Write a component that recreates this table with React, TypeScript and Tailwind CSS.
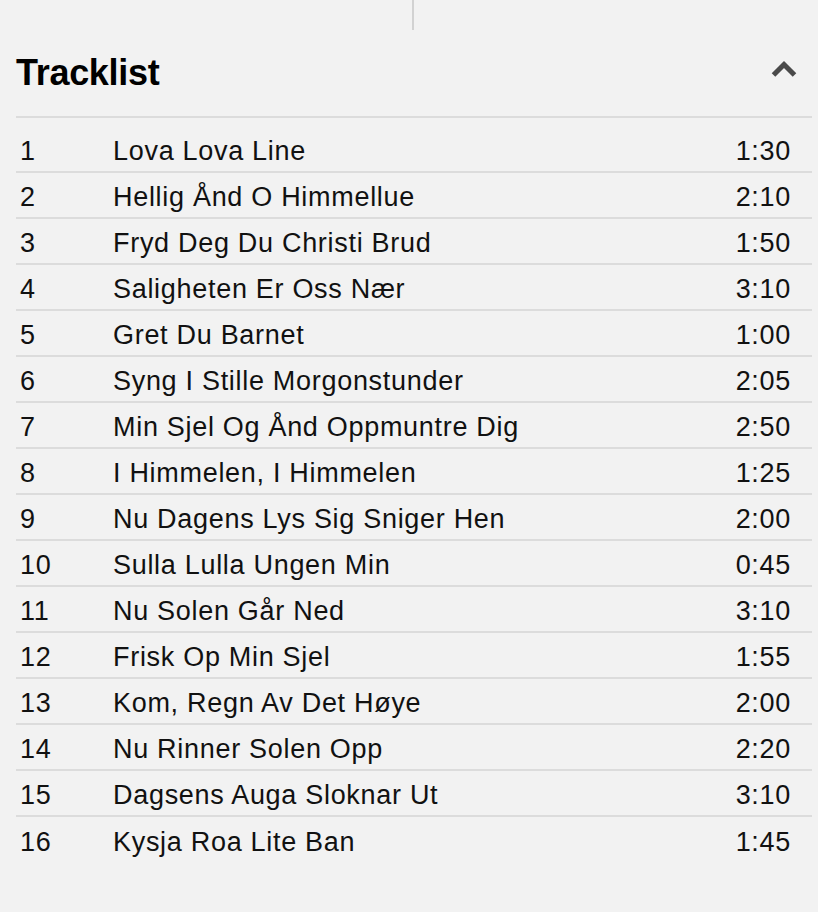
import React from "react";

interface Track {
  no: number;
  title: string;
  length: string;
}

const tracks: Track[] = [
  { no: 1, title: "Lova Lova Line", length: "1:30" },
  { no: 2, title: "Hellig Ånd O Himmellue", length: "2:10" },
  { no: 3, title: "Fryd Deg Du Christi Brud", length: "1:50" },
  { no: 4, title: "Saligheten Er Oss Nær", length: "3:10" },
  { no: 5, title: "Gret Du Barnet", length: "1:00" },
  { no: 6, title: "Syng I Stille Morgonstunder", length: "2:05" },
  { no: 7, title: "Min Sjel Og Ånd Oppmuntre Dig", length: "2:50" },
  { no: 8, title: "I Himmelen, I Himmelen", length: "1:25" },
  { no: 9, title: "Nu Dagens Lys Sig Sniger Hen", length: "2:00" },
  { no: 10, title: "Sulla Lulla Ungen Min", length: "0:45" },
  { no: 11, title: "Nu Solen Går Ned", length: "3:10" },
  { no: 12, title: "Frisk Op Min Sjel", length: "1:55" },
  { no: 13, title: "Kom, Regn Av Det Høye", length: "2:00" },
  { no: 14, title: "Nu Rinner Solen Opp", length: "2:20" },
  { no: 15, title: "Dagsens Auga Sloknar Ut", length: "3:10" },
  { no: 16, title: "Kysja Roa Lite Ban", length: "1:45" },
];

const App: React.FC = () => {
  return (
    <div className="min-h-screen bg-[#f2f2f2] font-['Liberation_Sans',Arial,sans-serif] text-[#111]">
      {/* divider stub from the section above */}
      <div className="ml-[412px] h-[30px] w-[2px] bg-[#d2d2d2]" />

      <div className="pl-4 pr-[6px]">
        <div className="flex h-[86px] items-center justify-between">
          <h2 className="text-[36px] font-bold tracking-[-0.3px] text-black">Tracklist</h2>
          <button className="mr-[14px] mb-[9px] text-[#4a4a4a]" aria-label="Collapse">
            <svg width="28" height="19" viewBox="0 0 28 19" fill="none">
              <path
                d="M3.5 16 L14 5.5 L24.5 16"
                stroke="currentColor"
                strokeWidth="5"
                strokeLinecap="butt"
                strokeLinejoin="miter"
              />
            </svg>
          </button>
        </div>
        <div className="h-[2px] bg-[#dcdcdc]" />

        <ul className="mt-[9px] divide-y-2 divide-[#dcdcdc]">
          {tracks.map((t) => (
            <li
              key={t.no}
              className="flex h-[46px] items-center pt-1 text-[27px] leading-none tracking-[0.7px]"
            >
              <span className="w-[97px] pl-[4px]">{t.no}</span>
              <span className="flex-1">{t.title}</span>
              <span className="pr-[21px]">{t.length}</span>
            </li>
          ))}
        </ul>
      </div>
    </div>
  );
};

export default App;
